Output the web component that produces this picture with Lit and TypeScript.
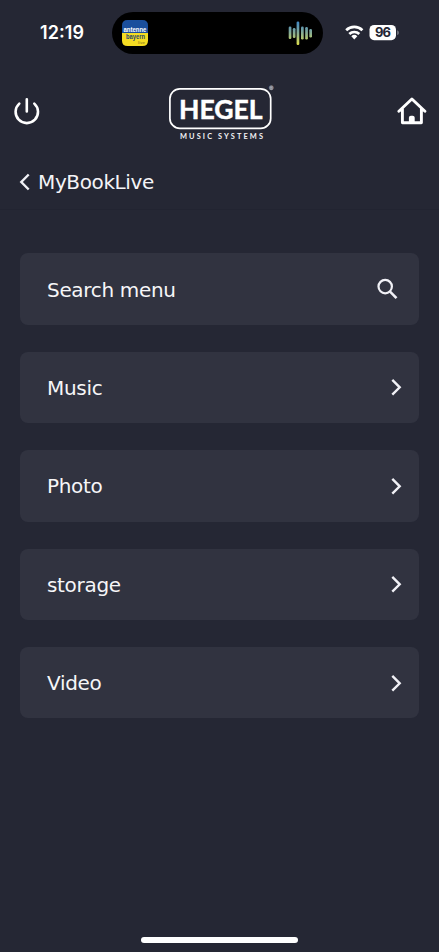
import { LitElement, html, css, svg } from "lit";
import { customElement } from "lit/decorators.js";

@customElement("status-bar")
class StatusBar extends LitElement {
  static styles = css`
    :host { display: flex; height: 66px; box-sizing: border-box; padding-top: 12px; align-items: flex-start; }
    svg { display: block; }
    .time { width: 112px; height: 42px; flex: none; }
    .island { width: 211px; height: 41.5px; flex: none; box-sizing: border-box; border-radius: 21px; background: #000; display: flex; justify-content: space-between; padding: 8px 10px 0; }
    .status { width: 116px; height: 42px; flex: none; }
    text { font-family: Inter, "Liberation Sans", sans-serif; }
    .clock { font-size: 18px; font-weight: 600; fill: #fff; }
    .level { font-size: 13px; font-weight: 700; fill: #242634; }
    .station { font-family: "Liberation Sans", Arial, sans-serif; font-weight: 700; }
  `;
  bars = [
    [0.7, 14.5, 27], [4.8, 16, 26], [8.6, 9.5, 33], [13, 14.5, 27.5], [17.2, 15, 27.5], [21.3, 17, 25.5],
  ];
  render() {
    return html`
      <svg class="time" viewBox="0 0 112 42"><text class="clock" x="40" y="27.3" textLength="44">12:19</text></svg>
      <div class="island">
        <svg width="26" height="26" viewBox="0 0 26 26">
          <path d="M0 13V5.500Q0 0 5.500 0h15Q26 0 26 5.500V13z" fill="#1a4f9d" />
          <path d="M0 13v7.500Q0 26 5.500 26h15q5.500 0 5.500-5.500V13z" fill="#f4dc22" />
          <text class="station" x="1.4" y="12.3" font-size="7.2" fill="#fff" textLength="23" lengthAdjust="spacingAndGlyphs">antenne</text>
          <text class="station" x="4" y="18.7" font-size="7" fill="#27466d" textLength="19" lengthAdjust="spacingAndGlyphs">bayern</text>
          <text class="station" x="16" y="23.500" font-size="4" fill="#a08a20" textLength="7">live</text>
        </svg>
        <svg width="25" height="26" viewBox="0 8 25 26">
          <defs>
            <linearGradient id="wave" gradientUnits="userSpaceOnUse" x1="0" y1="9" x2="0" y2="33">
              <stop offset="0" stop-color="#3c86c8" /><stop offset=".45" stop-color="#7fa79a" /><stop offset="1" stop-color="#dfe04c" />
            </linearGradient>
          </defs>
          ${this.bars.map(([x, top, bottom]) => svg`<rect x=${x} y=${top} width="2.7" height=${bottom - top} rx="1.2" fill="url(#wave)" />`)}
        </svg>
      </div>
      <svg class="status" viewBox="323 12 116 42">
        <g fill="none" stroke="#fff" stroke-width="2.7">
          <path d="M346.2 30.2a11.6 11.6 0 0 1 16.2 0" />
          <path d="M349.3 34a7.2 7.2 0 0 1 10 0" />
        </g>
        <path d="M354.3 39.4l-3-3.1a4.3 4.3 0 0 1 6 0z" fill="#fff" />
        <rect x="369.5" y="25" width="26.5" height="15.2" rx="4.6" fill="#fff" />
        <path d="M397.3 30.2c1.9.7 1.9 4.2 0 4.9z" fill="#8a8b94" />
        <text class="level" x="375" y="37.3" textLength="16">96</text>
      </svg>
    `;
  }
}

@customElement("brand-header")
class BrandHeader extends LitElement {
  static styles = css`
    :host { display: flex; justify-content: space-between; height: 89px; box-sizing: border-box; padding: 18px 12px 0 13px; }
    svg { display: block; }
    .side { margin-top: 12px; }
    .logo { margin-left: 4px; }
    .name { font-family: Lato, "Liberation Sans", sans-serif; font-weight: 700; font-size: 27.5px; fill: #fff; stroke: #fff; stroke-width: 0.5px; }
    .sub { font-family: Lato, "Liberation Sans", sans-serif; font-weight: 700; font-size: 7.4px; fill: #f2f2f5; }
    .mark { font-family: "Liberation Sans", Arial, sans-serif; font-size: 6px; fill: #c8c8ce; }
  `;
  render() {
    return html`
      <svg class="side" width="28" height="30" viewBox="13 96 28 30" fill="none" stroke="#fff" stroke-width="2.6" stroke-linecap="round">
        <path d="M26.8 99.3v12.2M19.3 103.6a11.2 11.2 0 1 0 15 0" />
      </svg>
      <svg class="logo" width="110" height="60" viewBox="166 84 110 60">
        <rect x="169.9" y="88.8" width="100.8" height="39.6" rx="10" fill="none" stroke="#fff" stroke-width="1.7" />
        <text class="name" x="179" y="118.6" textLength="83.500" lengthAdjust="spacingAndGlyphs">HEGEL</text>
        <circle cx="271.3" cy="88" r="2.2" fill="#777883" />
        <text class="mark" x="269" y="90">®</text>
        <text class="sub" x="180" y="138.7" textLength="83">MUSIC SYSTEMS</text>
      </svg>
      <svg class="side" width="30" height="30" viewBox="397 96 30 30">
        <path d="M398.9 111.3l13-12.3 13 12.3M402.4 109v13.7h19V109" fill="none" stroke="#fff" stroke-width="2.9" stroke-linecap="round" stroke-linejoin="round" />
        <path d="M408.9 124v-6.2q0-2 2-2h1.800q2 0 2 2v6.200z" fill="#fff" />
      </svg>
    `;
  }
}

@customElement("menu-row")
class MenuRow extends LitElement {
  static properties = { label: {}, kind: {} };
  static styles = css`
    :host { display: flex; align-items: center; justify-content: space-between; height: 71.4px; box-sizing: border-box; padding: 0 17px 0 27px; border-radius: 8px; background: #313340; }
    .label { font-size: 20px; line-height: 24px; letter-spacing: -0.32px; color: #f6f6f8; padding-top: 1px; }
    svg { display: block; }
    .search { margin-right: 3px; }
  `;
  declare label: string;
  declare kind: string;
  render() {
    return html`
      <span class="label">${this.label}</span>
      ${this.kind === "search"
        ? html`<svg class="search" width="24" height="24" viewBox="0 0 24 24" fill="none" stroke="#f1f1f6" stroke-width="2.2"><circle cx="10.2" cy="9.6" r="6.7" /><path d="M14.8 14.400l6.700 6.700" stroke-width="2.6" /></svg>`
        : html`<svg width="12" height="20" viewBox="0 0 12 20" fill="none" stroke="#f1f1f6" stroke-width="2.4"><path d="M2.300 2.900l7.400 7.400-7.400 7.400" /></svg>`}
    `;
  }
}

@customElement("app-root")
class AppRoot extends LitElement {
  static styles = css`
    :host { display: flex; flex-direction: column; height: 952px; background: #252734; font-family: "DejaVu Sans", Verdana, sans-serif; overflow: hidden; }
    .crumb { display: flex; align-items: center; height: 55px; box-sizing: border-box; padding: 0 0 1px 19px; border-bottom: 1px solid #222431; color: #f4f4f7; font-size: 20px; letter-spacing: -0.38px; gap: 7px; }
    .crumb svg { display: block; }
    .list { display: flex; flex-direction: column; gap: 27px; padding: 43.4px 20px 0; flex: 1; }
    .home { width: 157px; height: 6px; border-radius: 3px; background: #fff; margin: 0 auto 9px; }
  `;
  render() {
    return html`
      <status-bar></status-bar>
      <brand-header></brand-header>
      <div class="crumb">
        <svg width="12" height="20" viewBox="0 0 12 20" fill="none" stroke="#f1f1f6" stroke-width="2.4"><path d="M9.700 2.500L2.300 10l7.400 7.500" /></svg>
        <span>MyBookLive</span>
      </div>
      <div class="list">
        <menu-row label="Search menu" kind="search"></menu-row>
        ${["Music", "Photo", "storage", "Video"].map((l) => html`<menu-row .label=${l}></menu-row>`)}
      </div>
      <div class="home"></div>
    `;
  }
}
